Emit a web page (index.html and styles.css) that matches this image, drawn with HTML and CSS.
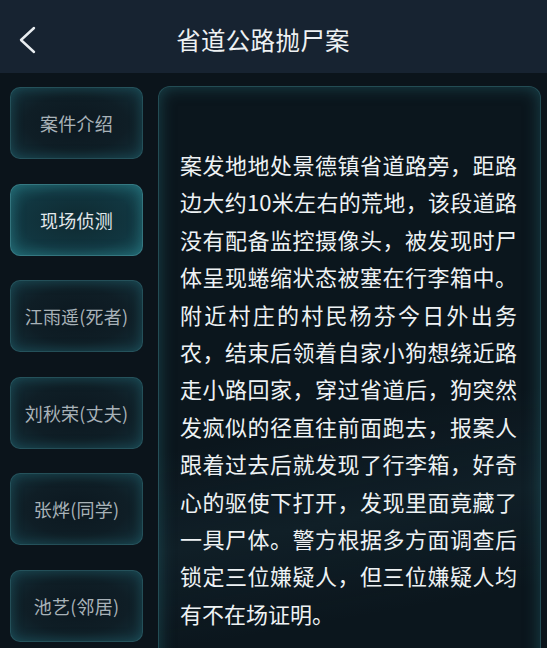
FILE: index.html
```html
<!DOCTYPE html>
<html lang="zh-CN">
<head>
<meta charset="utf-8">
<title>省道公路抛尸案</title>
<link rel="stylesheet" href="styles.css">
</head>
<body>
<header class="topbar">
  <button class="back" aria-label="返回">
    <svg width="20" height="28" viewBox="0 0 20 28"><polyline points="16,2 3,14 16,26" fill="none" stroke="#e9edf0" stroke-width="2.4" stroke-linecap="round" stroke-linejoin="round"/></svg>
  </button>
  <h1 class="title">省道公路抛尸案</h1>
</header>
<main class="main">
  <nav class="tabs">
    <div class="tab">案件介绍</div>
    <div class="tab active">现场侦测</div>
    <div class="tab">江雨遥(死者)</div>
    <div class="tab">刘秋荣(丈夫)</div>
    <div class="tab">张烨(同学)</div>
    <div class="tab">池艺(邻居)</div>
  </nav>
  <section class="panel">
    <div class="text">
      <span class="ln">案发地地处景德镇省道路旁，距路</span>
      <span class="ln">边大约10米左右的荒地，该段道路</span>
      <span class="ln">没有配备监控摄像头，被发现时尸</span>
      <span class="ln">体呈现蜷缩状态被塞在行李箱中。</span>
      <span class="ln">附近村庄的村民杨芬今日外出务</span>
      <span class="ln">农，结束后领着自家小狗想绕近路</span>
      <span class="ln">走小路回家，穿过省道后，狗突然</span>
      <span class="ln">发疯似的径直往前面跑去，报案人</span>
      <span class="ln">跟着过去后就发现了行李箱，好奇</span>
      <span class="ln">心的驱使下打开，发现里面竟藏了</span>
      <span class="ln">一具尸体。警方根据多方面调查后</span>
      <span class="ln">锁定三位嫌疑人，但三位嫌疑人均</span>
      <span class="ln last">有不在场证明。</span>
    </div>
  </section>
</main>
</body>
</html>
```
FILE: styles.css
```css
* { box-sizing: border-box; }
html, body { margin: 0; padding: 0; }
body {
  width: 547px;
  height: 648px;
  overflow: hidden;
  background: #0b141b;
  font-family: "Noto Sans CJK SC", "Noto Sans", sans-serif;
  color: #eef2f4;
  display: flex;
  flex-direction: column;
}
.topbar {
  height: 73px;
  flex: none;
  background: #172331;
  display: flex;
  align-items: center;
  position: relative;
  padding-left: 18px;
}
.back {
  background: none;
  border: 0;
  padding: 0;
  width: 20px;
  height: 28px;
  display: flex;
  margin-top: 7px;
}
.title {
  margin: 0;
  position: absolute;
  left: 0;
  right: 0;
  top: 0;
  height: 73px;
  line-height: 80px;
  text-align: center;
  padding-right: 21px;
  font-size: 24.5px;
  font-weight: 400;
  color: #eef1f3;
  letter-spacing: 0.3px;
  pointer-events: none;
}
.main {
  flex: 1;
  min-height: 0;
  overflow: hidden;
  display: flex;
  align-items: flex-start;
  padding: 13px 0 0 10px;
  gap: 15px;
}
.tabs {
  width: 133px;
  display: flex;
  flex-direction: column;
  gap: 24.5px;
  padding-top: 1px;
}
.tab {
  height: 72px;
  border-radius: 10px;
  border: 1px solid rgba(64, 135, 145, 0.42);
  background: radial-gradient(ellipse at center, #0c1820 0%, #0f1e26 55%, #13303a 100%);
  box-shadow: inset 0 0 12px rgba(38, 110, 120, 0.5);
  display: flex;
  align-items: center;
  justify-content: center;
  font-size: 18px;
  color: #a8b2b8;
  letter-spacing: 0.2px;
}
.tab.active {
  background: radial-gradient(ellipse at center, #0f2a31 0%, #113640 60%, #17505a 100%);
  border-color: rgba(80, 160, 170, 0.55);
  box-shadow: inset 0 0 14px rgba(50, 140, 150, 0.6);
  color: #e2e8eb;
}
.panel {
  width: 383px;
  height: 600px;
  flex: none;
  border-radius: 12px;
  border: 1px solid rgba(60, 130, 140, 0.5);
  background:
    linear-gradient(170deg, rgba(0,0,0,0) 55%, rgba(60,110,130,0.10) 70%, rgba(0,0,0,0) 85%),
    #0b161d;
  box-shadow: inset 0 0 16px rgba(38, 105, 115, 0.55);
  padding: 59px 23px 0 21px;
}
.text {
  font-size: 22px;
  line-height: 37.4px;
  color: #eef2f4;
}
.ln {
  display: block;
  text-align: justify;
  text-align-last: justify;
  white-space: nowrap;
}
.ln.last {
  text-align-last: left;
}
```
